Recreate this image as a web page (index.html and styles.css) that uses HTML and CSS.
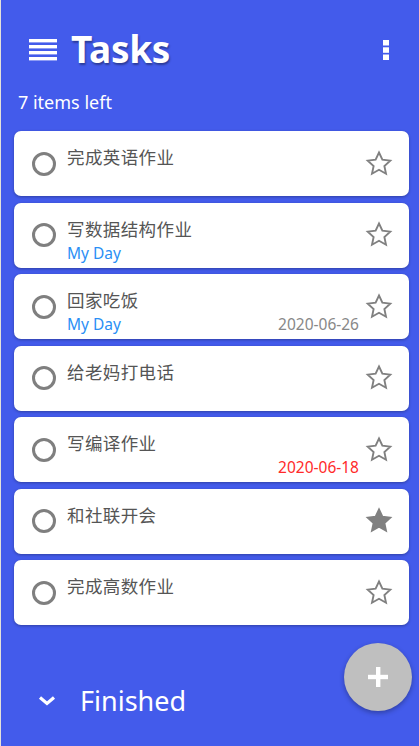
FILE: index.html
```html
<!DOCTYPE html>
<html>
<head>
  <title>Tasks</title>
  <meta name="viewport" content="width=device-width, initial-scale=1.0">
  <link rel="stylesheet" href="styles.css">
</head>
<body>
  <div class="app">
    <header class="topbar">
      <svg class="menu-icon" width="28" height="22" viewBox="0 0 28 22">
        <rect x="0" y="0" width="28" height="3.4" fill="#fff"/>
        <rect x="0" y="6" width="28" height="3.4" fill="#fff"/>
        <rect x="0" y="12" width="28" height="3.4" fill="#fff"/>
        <rect x="0" y="18" width="28" height="3.4" fill="#fff"/>
      </svg>
      <h1 class="title">Tasks</h1>
      <svg class="more-icon" width="6" height="20" viewBox="0 0 6 20">
        <rect x="0" y="0" width="6" height="5.5" fill="#fff"/>
        <rect x="0" y="7.3" width="6" height="5.5" fill="#fff"/>
        <rect x="0" y="14.5" width="6" height="5.5" fill="#fff"/>
      </svg>
    </header>

    <div class="count">7 items left</div>

    <ul class="tasks">
      <li class="task">
        <span class="check"></span>
        <div class="task-body">
          <div class="task-title">完成英语作业</div>
        </div>
        <svg class="star" width="30" height="30" viewBox="0 0 24 24"><path d="M12 2.8l2.7 5.8 6.3.7-4.7 4.3 1.3 6.2-5.6-3.2-5.6 3.2 1.3-6.2-4.7-4.3 6.3-.7z" fill="none" stroke="#808080" stroke-width="1.5"/></svg>
      </li>
      <li class="task">
        <span class="check"></span>
        <div class="task-body">
          <div class="task-title">写数据结构作业</div>
          <div class="task-meta"><span class="myday">My Day</span></div>
        </div>
        <svg class="star" width="30" height="30" viewBox="0 0 24 24"><path d="M12 2.8l2.7 5.8 6.3.7-4.7 4.3 1.3 6.2-5.6-3.2-5.6 3.2 1.3-6.2-4.7-4.3 6.3-.7z" fill="none" stroke="#808080" stroke-width="1.5"/></svg>
      </li>
      <li class="task">
        <span class="check"></span>
        <div class="task-body">
          <div class="task-title">回家吃饭</div>
          <div class="task-meta"><span class="myday">My Day</span><span class="due">2020-06-26</span></div>
        </div>
        <svg class="star" width="30" height="30" viewBox="0 0 24 24"><path d="M12 2.8l2.7 5.8 6.3.7-4.7 4.3 1.3 6.2-5.6-3.2-5.6 3.2 1.3-6.2-4.7-4.3 6.3-.7z" fill="none" stroke="#808080" stroke-width="1.5"/></svg>
      </li>
      <li class="task">
        <span class="check"></span>
        <div class="task-body">
          <div class="task-title">给老妈打电话</div>
        </div>
        <svg class="star" width="30" height="30" viewBox="0 0 24 24"><path d="M12 2.8l2.7 5.8 6.3.7-4.7 4.3 1.3 6.2-5.6-3.2-5.6 3.2 1.3-6.2-4.7-4.3 6.3-.7z" fill="none" stroke="#808080" stroke-width="1.5"/></svg>
      </li>
      <li class="task">
        <span class="check"></span>
        <div class="task-body">
          <div class="task-title">写编译作业</div>
          <div class="task-meta"><span class="due overdue">2020-06-18</span></div>
        </div>
        <svg class="star" width="30" height="30" viewBox="0 0 24 24"><path d="M12 2.8l2.7 5.8 6.3.7-4.7 4.3 1.3 6.2-5.6-3.2-5.6 3.2 1.3-6.2-4.7-4.3 6.3-.7z" fill="none" stroke="#808080" stroke-width="1.5"/></svg>
      </li>
      <li class="task">
        <span class="check"></span>
        <div class="task-body">
          <div class="task-title">和社联开会</div>
        </div>
        <svg class="star" width="30" height="30" viewBox="0 0 24 24"><path d="M12 2.8l2.7 5.8 6.3.7-4.7 4.3 1.3 6.2-5.6-3.2-5.6 3.2 1.3-6.2-4.7-4.3 6.3-.7z" fill="#808080" stroke="#808080" stroke-width="1.5"/></svg>
      </li>
      <li class="task">
        <span class="check"></span>
        <div class="task-body">
          <div class="task-title">完成高数作业</div>
        </div>
        <svg class="star" width="30" height="30" viewBox="0 0 24 24"><path d="M12 2.8l2.7 5.8 6.3.7-4.7 4.3 1.3 6.2-5.6-3.2-5.6 3.2 1.3-6.2-4.7-4.3 6.3-.7z" fill="none" stroke="#808080" stroke-width="1.5"/></svg>
      </li>
    </ul>

    <div class="finished">
      <svg class="chevron" width="18" height="10" viewBox="0 0 18 10"><path d="M2 1.5l7 6 7-6" fill="none" stroke="#fff" stroke-width="3.2"/></svg>
      <span>Finished</span>
    </div>

    <button class="fab">
      <svg width="24" height="24" viewBox="0 0 24 24"><rect x="10" y="2" width="4.4" height="20" fill="#fff"/><rect x="2" y="9.8" width="20" height="4.4" fill="#fff"/></svg>
    </button>
  </div>
</body>
</html>
```

FILE: styles.css
```css
html, body { margin: 0; height: 100%; }
body { background: #435beb; font-family: "Noto Sans", "Noto Sans CJK SC", sans-serif; color: #fff; }
.app { position: relative; height: 746px; border-left: 1px solid #e4e1da; box-sizing: border-box; overflow: hidden; }

.topbar { display: flex; align-items: center; padding: 26px 30px 0 28px; height: 46px; }
.menu-icon { display: block; margin-top: 2px; }
.title { flex: 1; margin: 0 0 0 14px; font-size: 37px; font-weight: 700; line-height: 46px; text-shadow: 1px 2px 2px rgba(0, 0, 0, 0.35); letter-spacing: -0.3px; }
.more-icon { display: block; margin-top: 2px; }

.count { padding: 17px 0 0 17px; font-size: 18px; line-height: 26px; }

.tasks { list-style: none; margin: 16px 10px 0 13px; padding: 0; display: flex; flex-direction: column; gap: 6.5px; }
.task { display: flex; align-items: center; height: 65px; background: #fff; border-radius: 7px; box-shadow: 0 1px 3px rgba(0, 0, 0, 0.3); padding: 0 15px 0 18px; box-sizing: border-box; }
.check { width: 18px; height: 18px; border: 3px solid #7f7f7f; border-radius: 50%; flex: none; }
.task-body { flex: 1; align-self: stretch; padding: 13px 0 0 11px; min-width: 0; }
.task-title { color: #555; font-size: 17.5px; line-height: 26px; letter-spacing: 0.4px; }
.task-meta { display: flex; justify-content: space-between; padding-right: 5px; font-size: 15.5px; line-height: 20px; margin-top: 1px; }
.myday { color: #2a8ff5; }
.due { color: #888; margin-left: auto; }
.due.overdue { color: #ff2a2a; }
.star { display: block; flex: none; }

.finished { display: flex; align-items: center; padding: 56px 0 0 37px; font-size: 27px; line-height: 40px; }
.chevron { display: block; margin-right: 24px; }

.fab { position: absolute; left: 343px; top: 643px; width: 68px; height: 68px; border-radius: 50%; border: none; background: #bfbfbf; box-shadow: 0 2px 5px rgba(0, 0, 0, 0.3); display: flex; align-items: center; justify-content: center; padding: 0; }
.fab svg { display: block; }
```
